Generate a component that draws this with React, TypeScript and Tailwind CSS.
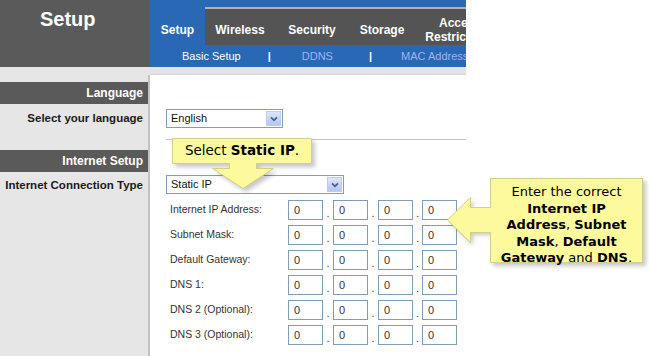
import React from 'react';

const ipRows = [
  'Internet IP Address:',
  'Subnet Mask:',
  'Default Gateway:',
  'DNS 1:',
  'DNS 2 (Optional):',
  'DNS 3 (Optional):',
];

function DropSelect({ value, width }: { value: string; width: string }) {
  return (
    <div className={`flex h-[19px] items-center border border-[#7f9db9] bg-white pl-[4px] text-[11px] text-[#111] ${width}`}>
      <span>{value}</span>
      <span className="ml-auto mr-px flex h-[15px] w-[15px] items-center justify-center border border-[#bccbee] bg-linear-to-b from-[#dce6fc] to-[#b3c5f1]">
        <svg width="8" height="6" viewBox="0 0 8 6">
          <path d="M1 1.3 L4 4.3 L7 1.3" fill="none" stroke="#4b5f8a" strokeWidth="1.8" />
        </svg>
      </span>
    </div>
  );
}

function Octet() {
  return (
    <div className="flex h-[20px] w-[35px] items-center border border-[#7f9db9] bg-white pl-[5px] text-[11px] text-[#333]">
      0
    </div>
  );
}

function Dot({ w }: { w: string }) {
  return <span className={`flex h-[20px] items-end justify-center pb-[1px] text-[11px] leading-[12px] text-[#333] ${w}`}>.</span>;
}

export default function App() {
  return (
    <div
      className="relative h-[356px] w-[649px] overflow-hidden bg-white"
      style={{ fontFamily: '"Liberation Sans", Arial, sans-serif' }}
    >
      <div className="flex w-[466px] flex-col overflow-hidden">
        {/* header */}
        <div className="flex h-[67px]">
          <div className="w-[150px] shrink-0 bg-[#5a5a5a] pl-[40px] pt-[7px] text-[20px] font-bold leading-[24px] text-white">
            Setup
          </div>
          <div className="flex w-[316px] shrink-0 flex-col bg-[#2868b5]">
            <div className="flex h-[45px]">
              <div className="flex w-[55px] shrink-0 justify-center pt-[23px] text-[12px] font-bold leading-[15px] text-white">
                Setup
              </div>
              <div className="mt-[7px] flex h-[38px] flex-1 border-t-2 border-[#b2b2b2] bg-[#545454] text-[12px] font-bold leading-[14px] text-white">
                <div className="flex w-[70px] shrink-0 justify-center pt-[14px]">Wireless</div>
                <div className="flex w-[74px] shrink-0 justify-center pt-[14px]">Security</div>
                <div className="flex w-[66px] shrink-0 justify-center pt-[14px]">Storage</div>
                <div className="flex w-[90px] shrink-0 flex-col items-center pt-[7px] leading-[14px]">
                  <span>Access</span>
                  <span>Restrictions</span>
                </div>
              </div>
            </div>
            <div className="flex h-[22px] items-center whitespace-nowrap pl-[32px] text-[11px]">
              <span className="text-white">Basic Setup</span>
              <span className="ml-[27px] font-bold text-white">|</span>
              <span className="ml-[31px] text-[#a3b3ec]">DDNS</span>
              <span className="ml-[36px] font-bold text-white">|</span>
              <span className="ml-[29px] text-[#a3b3ec]">MAC Address Clone</span>
            </div>
          </div>
        </div>

        {/* band */}
        <div className="flex h-[8px]">
          <div className="w-[150px] bg-[#e6e6e6]" />
          <div className="flex-1 border-b border-[#d2d2d2] bg-[#e3e3e3]" />
        </div>

        {/* body */}
        <div className="flex h-[281px]">
          <div className="w-[150px] shrink-0 border-r-2 border-[#c3c3c3] bg-[#e6e6e6] text-right">
            <div className="mt-[7px] flex h-[22px] items-center justify-end bg-[#5a5a5a] pr-[5px] text-[12px] font-bold text-white">
              Language
            </div>
            <div className="flex h-[30px] items-center justify-end pr-[5px] text-[11.5px] font-bold text-[#1a1a1a]">
              Select your language
            </div>
            <div className="mt-[16px] flex h-[22px] items-center justify-end bg-[#5a5a5a] pr-[5px] text-[12px] font-bold text-white">
              Internet Setup
            </div>
            <div className="flex h-[28px] items-center justify-end pr-[5px] text-[11.5px] font-bold text-[#1a1a1a]">
              Internet Connection Type
            </div>
          </div>

          <div className="flex flex-1 flex-col pl-[16px] pt-[34px]">
            <DropSelect value="English" width="w-[117px]" />
            <div className="mt-[11px] h-px bg-[#c4c4c4]" />
            <div className="mt-[35px]">
              <DropSelect value="Static IP" width="w-[178px]" />
            </div>
            <div className="mt-[6px] flex flex-col gap-[5px]">
              {ipRows.map((label) => (
                <div key={label} className="flex h-[20px] items-center">
                  <span className="w-[122px] shrink-0 pl-[4px] text-[10.5px] text-[#333]">{label}</span>
                  <Octet />
                  <Dot w="w-[10px]" />
                  <Octet />
                  <Dot w="w-[10px]" />
                  <Octet />
                  <Dot w="w-[9px]" />
                  <Octet />
                </div>
              ))}
            </div>
          </div>
        </div>
      </div>

      {/* callout shapes */}
      <svg className="pointer-events-none absolute left-0 top-0" width="649" height="356" viewBox="0 0 649 356">
        <defs>
          <filter id="blur" x="-10%" y="-10%" width="130%" height="130%">
            <feGaussianBlur stdDeviation="2" />
          </filter>
        </defs>
        <g transform="translate(3 3)" filter="url(#blur)" fill="rgba(0,0,0,0.22)">
          <path d="M172 138 H312 V164 H257 V169 H274 L243 189 L212 169 H229 V164 H172 Z" />
          <path d="M490 178 H643 V263 H490 V232 H470 V243 L447 220 L470 197 V208 H490 Z" />
        </g>
        <g fill="#fcfa9d" stroke="#d3cf88" strokeWidth="1">
          <path d="M172.5 138.5 H311.5 V163.5 H256.5 V168.5 H273.5 L243 188.5 L212.5 168.5 H229.5 V163.5 H172.5 Z" />
          <path d="M490.5 178.5 H642.5 V262.5 H490.5 V232.5 H470.5 V242.5 L447.5 220 L470.5 197.5 V207.5 H490.5 Z" />
        </g>
      </svg>

      <div
        className="absolute left-[172px] top-[138px] flex h-[25px] w-[140px] items-center justify-center text-[13.5px] text-black"
        style={{ fontFamily: '"DejaVu Sans", Verdana, sans-serif' }}
      >
        <span>
          Select <b>Static IP</b>.
        </span>
      </div>

      <div
        className="absolute left-[490px] top-[178px] flex w-[153px] flex-col items-center pt-[6px] text-[13px] leading-[16.5px] text-black"
        style={{ fontFamily: '"DejaVu Sans", Verdana, sans-serif' }}
      >
        <span>Enter the correct</span>
        <span className="font-bold">Internet IP</span>
        <span>
          <b>Address</b>, <b>Subnet</b>
        </span>
        <span>
          <b>Mask</b>, <b>Default</b>
        </span>
        <span>
          <b>Gateway</b> and <b>DNS</b>.
        </span>
      </div>
    </div>
  );
}
